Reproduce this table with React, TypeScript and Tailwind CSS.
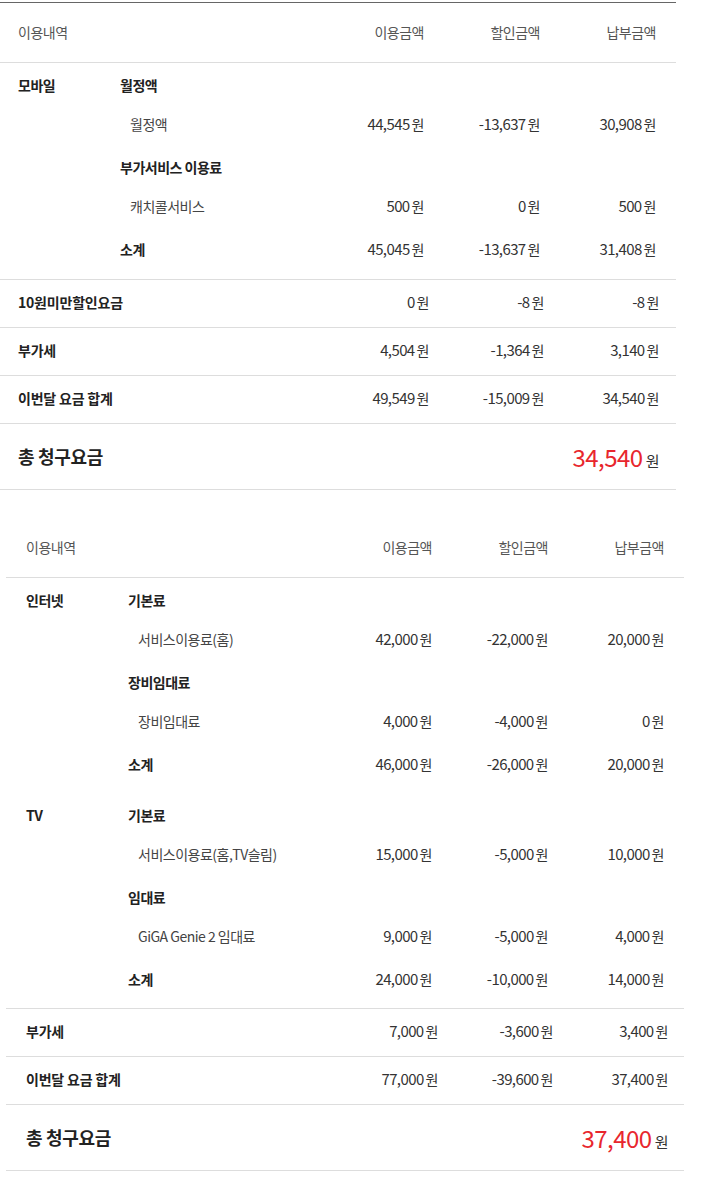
import React from 'react';

type Item = { label: string; amounts: [string, string, string] };
type Group = { title: string; items: Item[] };
type Section = {
  category: string;
  groups: Group[];
  subtotal: [string, string, string];
};
type Bill = {
  sections: Section[];
  summary: { label: string; amounts: [string, string, string] }[];
  total: string;
};

const MOBILE: Bill = {
  sections: [
    {
      category: '모바일',
      groups: [
        { title: '월정액', items: [{ label: '월정액', amounts: ['44,545', '-13,637', '30,908'] }] },
        { title: '부가서비스 이용료', items: [{ label: '캐치콜서비스', amounts: ['500', '0', '500'] }] },
      ],
      subtotal: ['45,045', '-13,637', '31,408'],
    },
  ],
  summary: [
    { label: '10원미만할인요금', amounts: ['0', '-8', '-8'] },
    { label: '부가세', amounts: ['4,504', '-1,364', '3,140'] },
    { label: '이번달 요금 합계', amounts: ['49,549', '-15,009', '34,540'] },
  ],
  total: '34,540',
};

const HOME: Bill = {
  sections: [
    {
      category: '인터넷',
      groups: [
        { title: '기본료', items: [{ label: '서비스이용료(홈)', amounts: ['42,000', '-22,000', '20,000'] }] },
        { title: '장비임대료', items: [{ label: '장비임대료', amounts: ['4,000', '-4,000', '0'] }] },
      ],
      subtotal: ['46,000', '-26,000', '20,000'],
    },
    {
      category: 'TV',
      groups: [
        { title: '기본료', items: [{ label: '서비스이용료(홈,TV슬림)', amounts: ['15,000', '-5,000', '10,000'] }] },
        { title: '임대료', items: [{ label: 'GiGA Genie 2 임대료', amounts: ['9,000', '-5,000', '4,000'] }] },
      ],
      subtotal: ['24,000', '-10,000', '14,000'],
    },
  ],
  summary: [
    { label: '부가세', amounts: ['7,000', '-3,600', '3,400'] },
    { label: '이번달 요금 합계', amounts: ['77,000', '-39,600', '37,400'] },
  ],
  total: '37,400',
};

function Won({ value }: { value: string }) {
  return (
    <span className="inline-flex items-baseline">
      <span className="text-[15px] tracking-[-0.6px]">{value}</span>
      <span className="ml-[2px]">원</span>
    </span>
  );
}

function Amounts({ values, wide }: { values: [string, string, string]; wide?: boolean }) {
  return (
    <div className="flex">
      {values.map((v, i) => (
        <div key={i} className={`${wide ? 'w-[116px]' : 'w-[115px]'} text-right`}>
          <Won value={v} />
        </div>
      ))}
    </div>
  );
}

function BillTable({ bill, second }: { bill: Bill; second?: boolean }) {
  const pl = second ? 'pl-[20px]' : 'pl-[18px]';
  const prItem = 'pr-[20px]';
  const prSum = second ? 'pr-[16px]' : 'pr-[17px]';

  return (
    <div
      className={
        second
          ? 'ml-[6px] mt-[28px] w-[678px]'
          : 'mt-[2px] w-[676px] border-t border-[#666]'
      }
    >
      {/* header */}
      <div className={`flex h-[60px] items-center border-b border-[#ddd] ${pl} ${prItem} text-[#555]`}>
        <div className="flex-1">이용내역</div>
        <div className="flex">
          <div className="w-[116px] text-right">이용금액</div>
          <div className="w-[116px] text-right">할인금액</div>
          <div className="w-[116px] text-right">납부금액</div>
        </div>
      </div>

      {/* details */}
      <div
        className={`flex flex-col gap-[11px] border-b border-[#ddd] pt-[2px] ${second ? 'pb-[9px]' : 'pb-[10px]'}`}
      >
        {bill.sections.map((s) => (
          <div key={s.category} className={`flex ${pl} ${prItem}`}>
            <div className="flex h-10 w-[102px] items-center font-bold text-[#222]">{s.category}</div>
            <div className="flex-1">
              {s.groups.map((g) => (
                <div key={g.title}>
                  <div className="flex h-10 items-center font-bold text-[#222]">{g.title}</div>
                  {g.items.map((it) => (
                    <div key={it.label} className="flex h-[42px] items-center pb-[4px] text-[#333]">
                      <div className="flex-1 pl-[10px] text-[#444]">{it.label}</div>
                      <Amounts values={it.amounts} wide />
                    </div>
                  ))}
                </div>
              ))}
              <div className="flex h-10 items-center text-[#333]">
                <div className="flex-1 font-bold text-[#222]">소계</div>
                <Amounts values={s.subtotal} wide />
              </div>
            </div>
          </div>
        ))}
      </div>

      {/* summary */}
      {bill.summary.map((r) => (
        <div key={r.label} className={`flex h-[48px] items-center border-b border-[#ddd] pb-[2px] ${pl} ${prSum} text-[#333]`}>
          <div className="flex-1 font-bold tracking-[-0.2px] text-[#222]">{r.label}</div>
          <Amounts values={r.amounts} />
        </div>
      ))}

      {/* total */}
      <div className={`flex h-[66px] items-center border-b border-[#ddd] ${pl} ${prSum}`}>
        <div className="flex-1 text-[18px] font-bold tracking-[-0.3px] text-[#222]">총 청구요금</div>
        <div className="flex items-baseline text-[#333]">
          <span className="text-[24px] tracking-[-0.5px] text-[#e8262d]">{bill.total}</span>
          <span className="ml-[3px] text-[15px]">원</span>
        </div>
      </div>
    </div>
  );
}

export default function App() {
  return (
    <div className="min-h-[1178px] w-[716px] bg-white font-['Noto_Sans_CJK_KR','Noto_Sans',sans-serif] text-[14px] tracking-[-0.5px]">
      <BillTable bill={MOBILE} />
      <BillTable bill={HOME} second />
    </div>
  );
}
